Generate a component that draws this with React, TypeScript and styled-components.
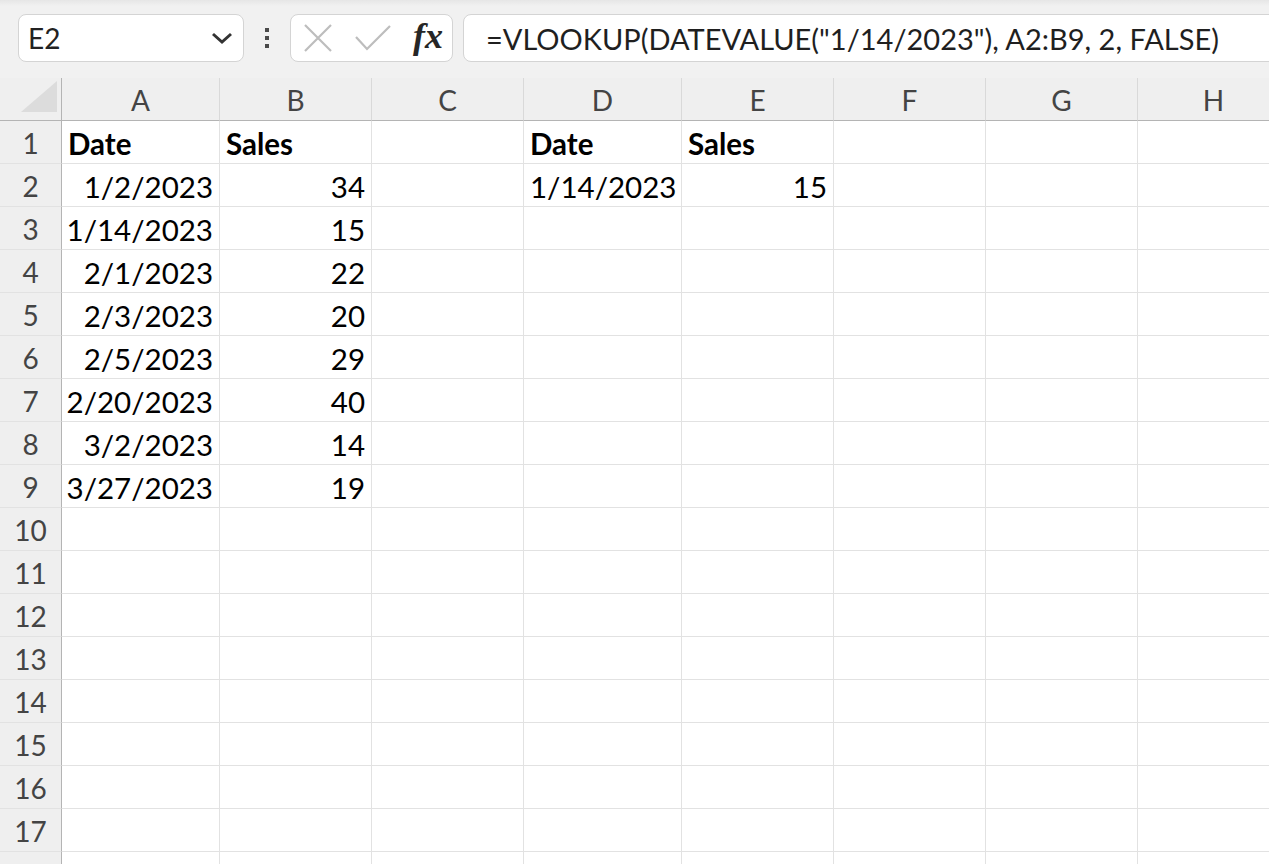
import React from 'react';
import styled, { createGlobalStyle } from 'styled-components';

const GlobalStyle = createGlobalStyle`
    html, body {
        margin: 0;
        padding: 0;
        background: #ffffff;
        overflow: hidden;
        font-family: Lato, "Open Sans", "Liberation Sans", sans-serif;
    }
`;

const Page = styled.div`
    width: 1269px;
    height: 864px;
    overflow: hidden;
    background: #ffffff;
`;

const Toolbar = styled.div`
    height: 78px;
    box-sizing: border-box;
    display: flex;
    align-items: flex-start;
    padding: 14px 0 0 18px;
    background: linear-gradient(#e6e6e6 0px, #f1f1f1 6px, #f1f1f1 100%);
    overflow: hidden;
`;

const Box = styled.div<{ $width?: number }>`
    height: 48px;
    box-sizing: border-box;
    background: #ffffff;
    border: 1px solid #d4d4d4;
    border-radius: 8px;
    display: flex;
    align-items: center;
    flex: ${(p) => (p.$width ? `0 0 ${p.$width}px` : '1 0 auto')};
`;

const NameBox = styled(Box)`
    justify-content: space-between;
    padding: 0 10px 0 9px;
    font-size: 28px;
    color: #222;
`;

const Dots = styled.div`
    width: 46px;
    height: 48px;
    display: flex;
    flex-direction: column;
    align-items: center;
    justify-content: center;
    gap: 4px;

    span {
        width: 4px;
        height: 4px;
        background: #4a4a4a;
    }
`;

const ButtonBox = styled(Box)`
    padding: 0 0 0 12px;
    gap: 22px;
`;

const Fx = styled.span`
    font-family: "Liberation Serif", "DejaVu Serif", serif;
    font-style: italic;
    font-weight: 700;
    font-size: 36px;
    color: #262626;
    margin-left: 0;
    line-height: 1;
    padding-bottom: 4px;
`;

const FormulaBox = styled(Box)`
    margin-left: 10px;
    margin-right: -20px;
    padding-left: 22px;
    font-size: 29px;
    color: #1f1f1f;
    white-space: nowrap;
`;

const Grid = styled.div`
    display: flex;
    flex-direction: column;
`;

const Row = styled.div<{ $header?: boolean }>`
    display: flex;
    height: 43px;
    flex: 0 0 43px;
    background: ${(p) => (p.$header ? '#efefef' : '#ffffff')};
`;

const Corner = styled.div`
    flex: 0 0 62px;
    box-sizing: border-box;
    border-right: 1px solid #b4b4b4;
    border-bottom: 1px solid #b4b4b4;
    display: flex;
    align-items: flex-end;
    justify-content: flex-end;
    padding: 0 4px 8px 0;
`;

const ColHead = styled.div<{ $w: number }>`
    flex: 0 0 ${(p) => p.$w}px;
    min-width: 0;
    box-sizing: border-box;
    border-right: 1px solid #d9d9d9;
    border-bottom: 1px solid #b4b4b4;
    display: flex;
    align-items: center;
    justify-content: center;
    font-size: 28px;
    color: #444;
    padding-top: 2px;
`;

const RowHead = styled.div`
    flex: 0 0 62px;
    box-sizing: border-box;
    background: #efefef;
    border-right: 1px solid #b4b4b4;
    border-bottom: 1px solid #e2e2e2;
    display: flex;
    align-items: center;
    justify-content: center;
    font-size: 28px;
    color: #444;
    padding-top: 2px;
`;

const Cell = styled.div<{ $w: number; $align?: 'left' | 'right'; $bold?: boolean }>`
    flex: 0 0 ${(p) => p.$w}px;
    width: ${(p) => p.$w}px;
    min-width: 0;
    box-sizing: border-box;
    border-right: 1px solid #e2e2e2;
    border-bottom: 1px solid #e2e2e2;
    display: flex;
    align-items: center;
    justify-content: ${(p) => (p.$align === 'right' ? 'flex-end' : 'flex-start')};
    padding: 2px 6px 0 6px;
    font-size: 29.5px;
    font-weight: ${(p) => (p.$bold ? 700 : 400)};
    color: #000;
    white-space: nowrap;
    overflow: visible;
`;

const columns = [
    { id: 'A', w: 158 },
    { id: 'B', w: 152 },
    { id: 'C', w: 152 },
    { id: 'D', w: 158 },
    { id: 'E', w: 152 },
    { id: 'F', w: 152 },
    { id: 'G', w: 152 },
    { id: 'H', w: 152 },
];

type CellValue = { text: string; align?: 'left' | 'right'; bold?: boolean };

const data: Record<string, CellValue> = {
    A1: { text: 'Date', bold: true },
    B1: { text: 'Sales', bold: true },
    D1: { text: 'Date', bold: true },
    E1: { text: 'Sales', bold: true },
    A2: { text: '1/2/2023', align: 'right' },
    A3: { text: '1/14/2023', align: 'right' },
    A4: { text: '2/1/2023', align: 'right' },
    A5: { text: '2/3/2023', align: 'right' },
    A6: { text: '2/5/2023', align: 'right' },
    A7: { text: '2/20/2023', align: 'right' },
    A8: { text: '3/2/2023', align: 'right' },
    A9: { text: '3/27/2023', align: 'right' },
    B2: { text: '34', align: 'right' },
    B3: { text: '15', align: 'right' },
    B4: { text: '22', align: 'right' },
    B5: { text: '20', align: 'right' },
    B6: { text: '29', align: 'right' },
    B7: { text: '40', align: 'right' },
    B8: { text: '14', align: 'right' },
    B9: { text: '19', align: 'right' },
    D2: { text: '1/14/2023' },
    E2: { text: '15', align: 'right' },
};

const rows = Array.from({ length: 18 }, (_, i) => i + 1);

const App: React.FC = () => {
    return (
        <Page>
            <GlobalStyle />
            <Toolbar>
                <NameBox $width={226}>
                    <span>E2</span>
                    <svg width="22" height="14" viewBox="0 0 22 14">
                        <path d="M2 3 L11 11 L20 3" fill="none" stroke="#333" strokeWidth="3" />
                    </svg>
                </NameBox>
                <Dots>
                    <span />
                    <span />
                    <span />
                </Dots>
                <ButtonBox $width={163}>
                    <svg width="30" height="30" viewBox="0 0 30 30">
                        <path d="M2 2 L28 28 M28 2 L2 28" stroke="#bdbdbd" strokeWidth="2.2" fill="none" />
                    </svg>
                    <svg width="36" height="26" viewBox="0 0 36 26">
                        <path d="M1 12 L12 24 L35 1" stroke="#bdbdbd" strokeWidth="2.2" fill="none" />
                    </svg>
                    <Fx>fx</Fx>
                </ButtonBox>
                <FormulaBox>=VLOOKUP(DATEVALUE("1/14/2023"), A2:B9, 2, FALSE)</FormulaBox>
            </Toolbar>
            <Grid>
                <Row $header>
                    <Corner>
                        <svg width="36" height="31" viewBox="0 0 36 31">
                            <path d="M0 31 L36 31 L36 0 Z" fill="#dcdcdc" />
                        </svg>
                    </Corner>
                    {columns.map((c) => (
                        <ColHead key={c.id} $w={c.w}>
                            {c.id}
                        </ColHead>
                    ))}
                </Row>
                {rows.map((r) => (
                    <Row key={r}>
                        <RowHead>{r}</RowHead>
                        {columns.map((c) => {
                            const v = data[`${c.id}${r}`];
                            return (
                                <Cell key={c.id} $w={c.w} $align={v?.align} $bold={v?.bold}>
                                    {v?.text}
                                </Cell>
                            );
                        })}
                    </Row>
                ))}
            </Grid>
        </Page>
    );
};

export default App;
